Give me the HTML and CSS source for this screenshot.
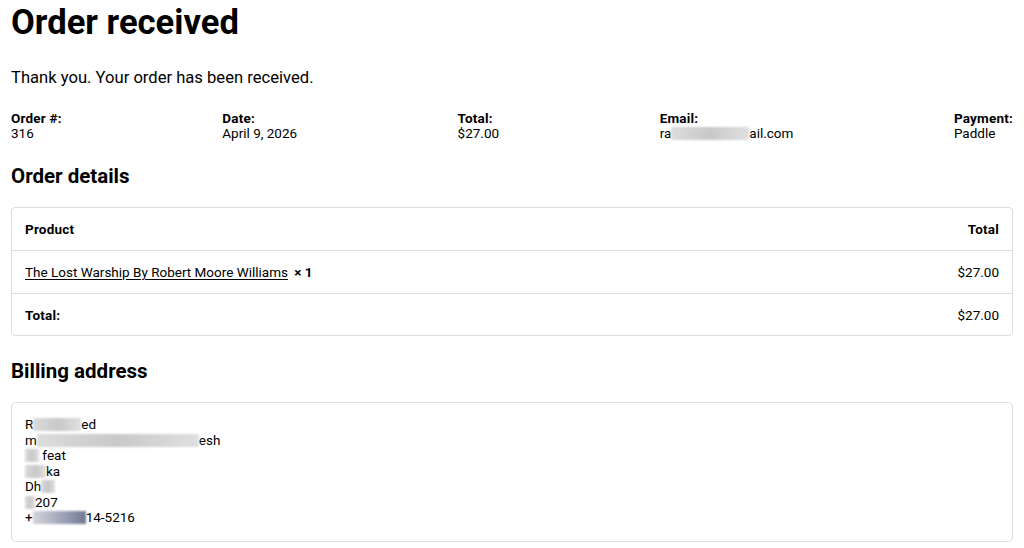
FILE: index.html
```html
<!DOCTYPE html>
<html lang="en">
<head>
  <meta charset="UTF-8" />
  <meta name="viewport" content="width=device-width, initial-scale=1.0" />
  <title>Order received</title>
  <link rel="stylesheet" href="styles.css">
</head>
<body>
  <h1 class="page-title">Order received</h1>

  <p class="thanks">Thank you. Your order has been received.</p>

  <!-- Order overview -->
  <ul class="overview">
    <li><span class="label">Order #:</span><span>316</span></li>
    <li><span class="label">Date:</span><span>April 9, 2026</span></li>
    <li><span class="label">Total:</span><span>$27.00</span></li>
    <li><span class="label">Email:</span><span>ra<span class="hidden" style="width: 78px"></span>ail.com</span></li>
    <li><span class="label">Payment:</span><span>Paddle</span></li>
  </ul>

  <h2 class="section-title">Order details</h2>
  <div class="box">
    <table class="order-table">
      <thead>
        <tr><th>Product</th><th class="num">Total</th></tr>
      </thead>
      <tbody>
        <tr>
          <td><a href="#">The Lost Warship By Robert Moore Williams</a> <strong class="qty">&times;&nbsp;1</strong></td>
          <td class="num">$27.00</td>
        </tr>
      </tbody>
      <tfoot>
        <tr><th>Total:</th><td class="num">$27.00</td></tr>
      </tfoot>
    </table>
  </div>

  <h2 class="section-title">Billing address</h2>
  <div class="box">
    <address class="address">
      <span>R<span class="hidden" style="width: 48px"></span>ed</span>
      <span>m<span class="hidden" style="width: 162px"></span>esh</span>
      <span><span class="hidden" style="width: 14px"></span> feat</span>
      <span><span class="hidden" style="width: 21px"></span>ka</span>
      <span>Dh<span class="hidden" style="width: 14px"></span></span>
      <span><span class="hidden" style="width: 10px"></span>207</span>
      <span>+<span class="hidden dark" style="width: 53px"></span>14-5216</span>
    </address>
  </div>
</body>
</html>
```

FILE: styles.css
```css
body {
  margin: 0 11px;
  font-family: Roboto, "Liberation Sans", sans-serif;
  color: #000;
  background: #fff;
}

.page-title {
  margin: 0;
  padding-top: 2px;
  font-size: 34.6px;
  line-height: 40px;
  font-weight: 700;
}

.thanks {
  margin: 24px 0 0;
  font-size: 16.6px;
  line-height: 24px;
}

/* overview row: five items spread across */
.overview {
  display: flex;
  justify-content: space-between;
  list-style: none;
  margin: 21px 0 0;
  padding: 0;
  font-size: 13.5px;
  line-height: 15px;
}
.overview li {
  display: flex;
  flex-direction: column;
}
.overview .label {
  font-weight: 700;
  letter-spacing: 0.2px;
}

.section-title {
  margin: 23px 0 0;
  font-size: 20.5px;
  line-height: 24px;
  font-weight: 700;
}

.box {
  margin-top: 19px;
  border: 1px solid #ddd;
  border-radius: 4px;
}

.order-table {
  width: 100%;
  border-collapse: collapse;
  font-size: 13.5px;
  line-height: 16px;
}
.order-table th,
.order-table td {
  padding: 13px;
  text-align: left;
}
.order-table tfoot th,
.order-table tfoot td {
  padding-bottom: 12px;
}
.order-table th {
  letter-spacing: 0.2px;
}
.order-table tbody tr,
.order-table tfoot tr {
  border-top: 1px solid #ddd;
}
.order-table .num {
  text-align: right;
}
.order-table a {
  color: #000;
  text-decoration: underline;
  text-underline-offset: 2px;
}
.order-table .qty {
  margin-left: 3px;
}

.address {
  display: flex;
  flex-direction: column;
  padding: 14px 13px 15px;
  font-style: normal;
  font-size: 13.5px;
  line-height: 15.5px;
}

/* blurred-out private bits */
.hidden {
  display: inline-block;
  height: 13px;
  vertical-align: -2px;
  background: linear-gradient(90deg, #dcdcdc, #c8c8c8 50%, #e0e0e0);
  filter: blur(1.2px);
}
.hidden.dark {
  background: linear-gradient(90deg, #d4d4da, #9aa0b4 60%, #6f7894);
}
```
